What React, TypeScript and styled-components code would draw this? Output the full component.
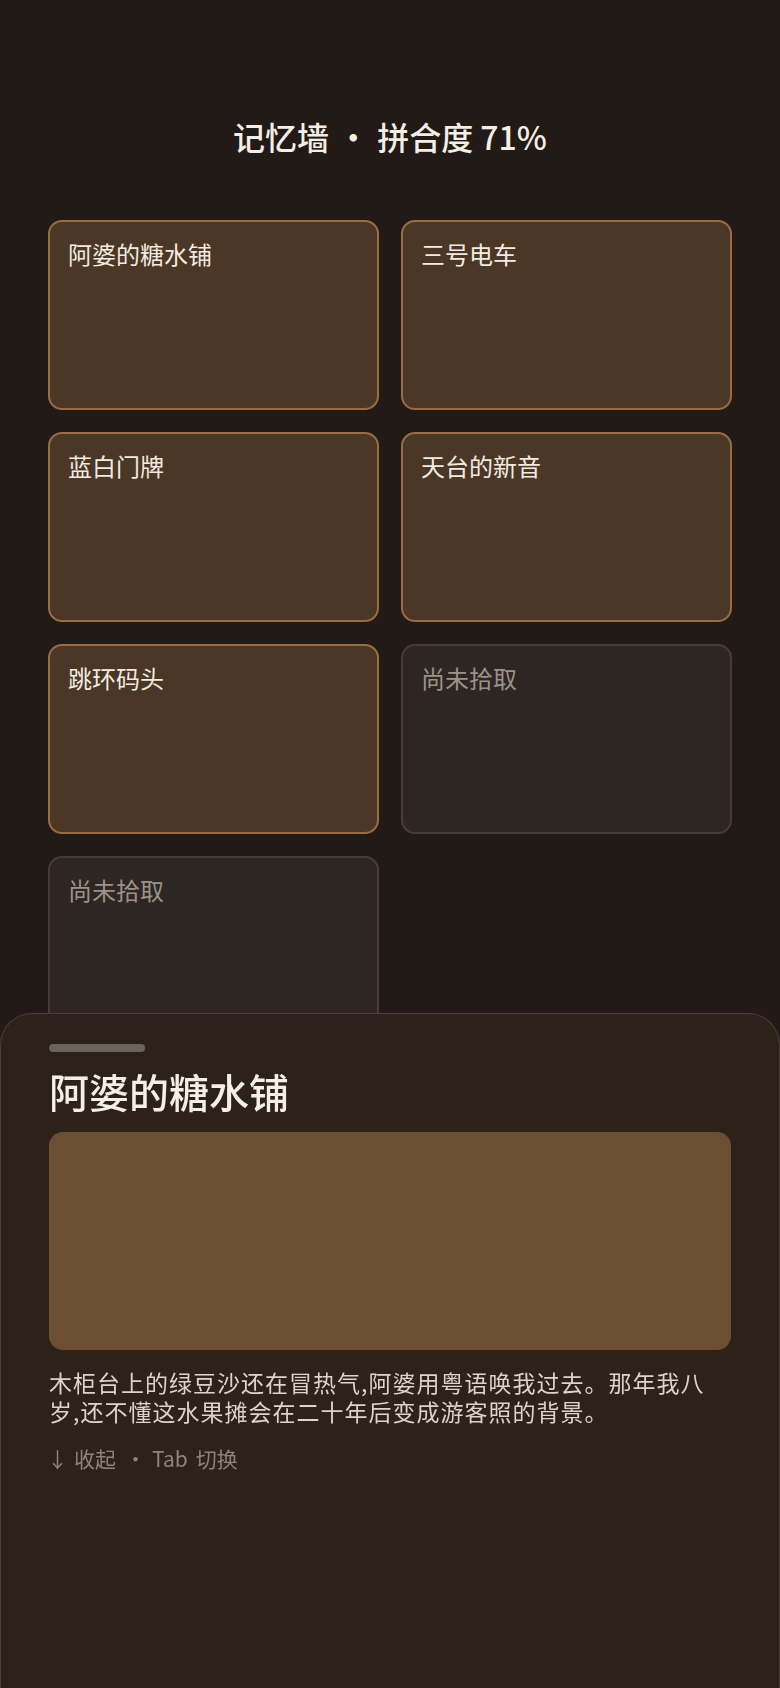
import styled, { createGlobalStyle } from "styled-components";

const GlobalStyle = createGlobalStyle`
  html, body {
    margin: 0;
    padding: 0;
    background: #211a16;
  }
  body {
    font-family: "Noto Sans CJK SC", "Noto Sans", sans-serif;
    color: #f4ede2;
  }
`;

type Memory = { id: string; title: string | null };

const MEMORIES: Memory[] = [
  { id: "tongsui", title: "阿婆的糖水铺" },
  { id: "tram", title: "三号电车" },
  { id: "plate", title: "蓝白门牌" },
  { id: "rooftop", title: "天台的新音" },
  { id: "pier", title: "跳环码头" },
  { id: "empty-1", title: null },
  { id: "empty-2", title: null },
];

const Page = styled.main`
  min-height: 100vh;
  box-sizing: border-box;
  padding: 116px 48px 0;
`;

const Title = styled.h1`
  margin: 0 0 64px;
  font-size: 32px;
  line-height: 40px;
  font-weight: 500;
  text-align: center;
  color: #f5eee4;

  .dot {
    margin: 0 8px;
  }
`;

const Grid = styled.div`
  display: grid;
  grid-template-columns: 1fr 1fr;
  gap: 22px;
`;

const Card = styled.div<{ $empty?: boolean }>`
  height: 190px;
  box-sizing: border-box;
  padding: 15px 18px;
  border-radius: 14px;
  border: 2px solid ${(p) => (p.$empty ? "#473d37" : "#9a6c44")};
  background: ${(p) => (p.$empty ? "#2e2622" : "#4a3726")};
  color: ${(p) => (p.$empty ? "#9d9287" : "#f3ebe0")};
  font-size: 24px;
  line-height: 33px;
`;

const Sheet = styled.section`
  position: fixed;
  left: 0;
  right: 0;
  bottom: 0;
  height: 40vh;
  box-sizing: border-box;
  padding: 30px 48px 0;
  display: flex;
  flex-direction: column;
  gap: 16px;
  background: rgba(45, 34, 27, 0.96);
  backdrop-filter: blur(10px);
  border: 1px solid #4b4039;
  border-bottom: none;
  border-radius: 32px 32px 0 0;
`;

const Handle = styled.div`
  width: 96px;
  height: 8px;
  border-radius: 4px;
  background: #6a625b;
`;

const SheetTitle = styled.h2`
  margin: -1px 0 0;
  font-size: 40px;
  line-height: 48px;
  font-weight: 500;
  color: #f6efe5;
`;

const Photo = styled.div`
  height: 218px;
  margin-top: 1px;
  border-radius: 14px;
  background: #6c4f33;
`;

const Story = styled.p`
  margin: 2px 0 0;
  max-width: 664px;
  font-size: 23px;
  line-height: 29px;
  letter-spacing: 1px;
  color: #ddd3c6;
`;

const Hint = styled.div`
  display: flex;
  align-items: center;
  margin-top: 2px;
  font-size: 21px;
  line-height: 28px;
  color: #8d8378;

  .arrow {
    margin: 0 6px 0 -2px;
  }

  .sep {
    margin: 0 6px 0 9px;
  }

  .tab {
    margin-right: 8px;
  }
`;

export default function App() {
  const current = MEMORIES[0];

  return (
    <>
      <GlobalStyle />
      <Page>
        <Title>
          记忆墙<span className="dot">·</span>拼合度 71%
        </Title>
        <Grid>
          {MEMORIES.map((m) => (
            <Card key={m.id} $empty={!m.title}>
              {m.title ?? "尚未拾取"}
            </Card>
          ))}
        </Grid>
      </Page>
      <Sheet>
        <Handle />
        <SheetTitle>{current.title}</SheetTitle>
        <Photo />
        <Story>
          木柜台上的绿豆沙还在冒热气,阿婆用粤语唤我过去。那年我八岁,还不懂这水果摊会在二十年后变成游客照的背景。
        </Story>
        <Hint>
          <span className="arrow">↓</span>
          <span>收起</span>
          <span className="sep">·</span>
          <span className="tab">Tab</span>
          <span>切换</span>
        </Hint>
      </Sheet>
    </>
  );
}
